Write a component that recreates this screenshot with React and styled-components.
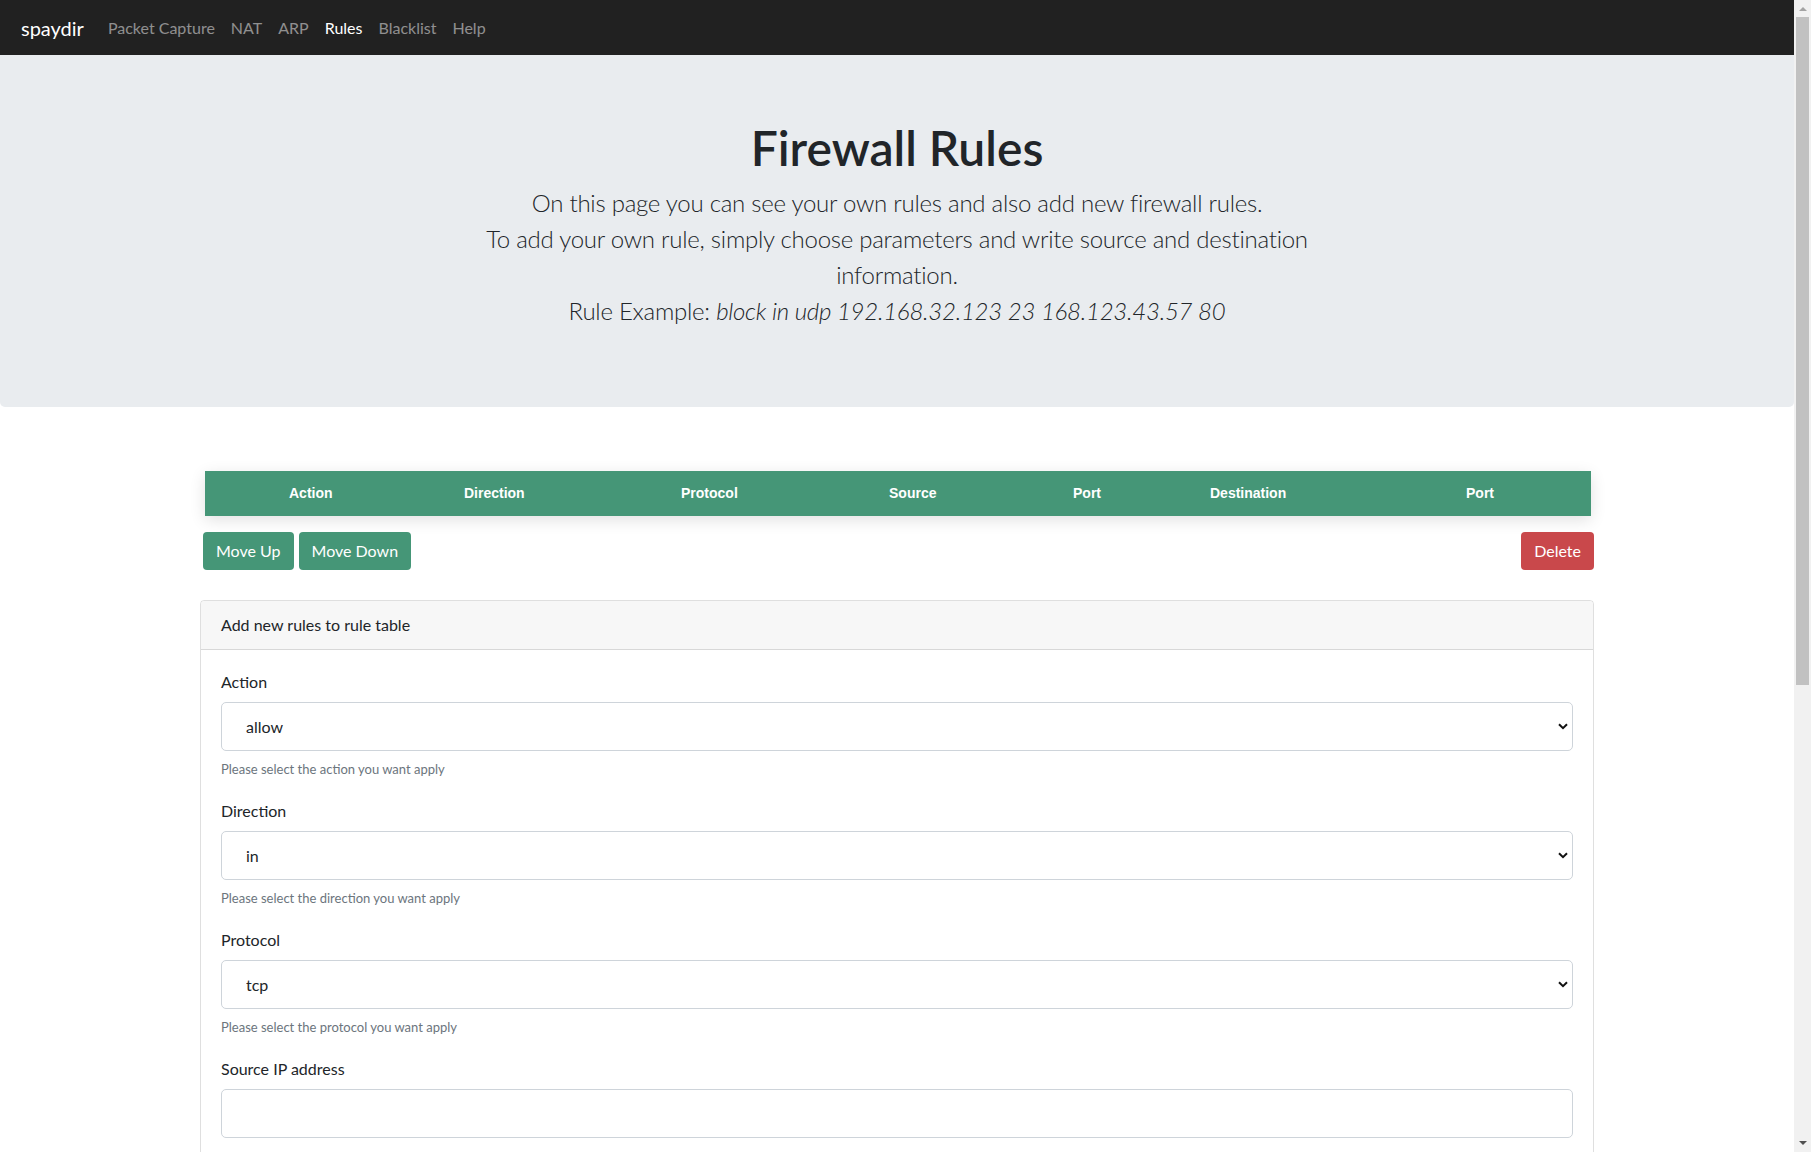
import React from "react";
import styled, { createGlobalStyle } from "styled-components";

const GlobalStyle = createGlobalStyle`
  html, body { margin: 0; padding: 0; }
  body {
    font-family: "Segoe UI", Lato, "Open Sans", sans-serif;
    font-size: 16px;
    line-height: 1.5;
    color: #212529;
    background: #fff;
    overflow: hidden;
  }
  * { box-sizing: border-box; }
`;

const Shell = styled.div`
  display: flex;
  align-items: flex-start;
  width: 100%;
`;

const Page = styled.div`
  flex: 1;
  min-width: 0;
`;

const ScrollBar = styled.aside`
  position: sticky;
  top: 0;
  flex: 0 0 17px;
  height: 100vh;
  display: flex;
  flex-direction: column;
  background: #f1f1f1;
`;

const ScrollButton = styled.div`
  flex: 0 0 17px;
  display: flex;
  align-items: center;
  justify-content: center;
`;

const ScrollThumb = styled.div`
  flex: 0 0 668px;
  margin: 0 2px;
  background: #c1c1c1;
`;

const ScrollTrack = styled.div`
  flex: 1;
`;

const Navbar = styled.nav`
  display: flex;
  align-items: center;
  height: 55px;
  padding: 0 16px 0 21px;
  background: #212121;
`;

const Brand = styled.a`
  color: #fff;
  font-size: 20px;
  line-height: 30px;
  margin-right: 16px;
  text-decoration: none;
`;

const NavLink = styled.a`
  color: ${(p) => (p.$active ? "#fff" : "rgba(255,255,255,0.5)")};
  padding: 8px;
  font-size: 16px;
  line-height: 24px;
  text-decoration: none;
`;

const Jumbotron = styled.header`
  background: #e9ecef;
  padding: 64px 32px 62px;
  border-radius: 0 0 5px 5px;
  text-align: center;
`;

const Title = styled.h1`
  margin: 0 0 8px;
  font-size: 48px;
  font-weight: 600;
  line-height: 1.2;
`;

const Lead = styled.p`
  max-width: 880px;
  margin: 0 auto 16px;
  font-size: 24px;
  font-weight: 300;
  line-height: 36px;
  letter-spacing: -0.25px;
`;

const Main = styled.main`
  max-width: 1394px;
  margin: 64px auto 0;
  padding-bottom: 260px;
`;

const RuleTable = styled.div`
  display: grid;
  grid-template-columns: 175px 217px 208px 184px 137px 256px 1fr;
  align-items: center;
  height: 45px;
  margin: 0 3px 0 4.5px;
  padding-left: 84.5px;
  background: #459677;
  color: #fff;
  font-family: "Liberation Sans", Arial, sans-serif;
  font-weight: 700;
  font-size: 14px;
  box-shadow: 0 4px 16px rgba(0, 0, 0, 0.12);
`;

const Th = styled.div``;

const ActionRow = styled.div`
  display: flex;
  gap: 5px;
  margin-top: 16px;
  padding-left: 3px;
`;

const Button = styled.button`
  font-family: inherit;
  font-size: 16px;
  line-height: 24px;
  padding: 6px 12px;
  border: 1px solid transparent;
  border-radius: 4px;
  color: #fff;
  background: ${(p) => (p.$variant === "danger" ? "#c9484b" : "#459677")};
  margin-left: ${(p) => (p.$push ? "auto" : "0")};
  cursor: pointer;
`;

const Card = styled.section`
  margin-top: 30px;
  border: 1px solid rgba(0, 0, 0, 0.125);
  border-radius: 4px;
`;

const CardHeader = styled.div`
  padding: 12px 20px;
  background: #f7f7f7;
  border-bottom: 1px solid rgba(0, 0, 0, 0.125);
  border-radius: 4px 4px 0 0;
`;

const CardBody = styled.div`
  padding: 20px;
`;

const FormGroup = styled.div`
  margin-bottom: 20px;
`;

const Label = styled.label`
  display: block;
  margin-bottom: 8px;
  line-height: 24px;
`;

const SelectWrap = styled.div`
  position: relative;
`;

const fieldCss = `
  display: block;
  width: 100%;
  height: 49px;
  padding: 0 24px;
  font-family: inherit;
  font-size: 16px;
  color: #212529;
  background: #fff;
  border: 1px solid #ced4da;
  border-radius: 5px;
  outline: none;
`;

const Select = styled.select`
  ${fieldCss}
  appearance: none;
  -webkit-appearance: none;
`;

const Input = styled.input`
  ${fieldCss}
`;

const Chevron = styled.svg`
  position: absolute;
  right: 5px;
  top: 50%;
  width: 10px;
  height: 7px;
  margin-top: -3px;
  pointer-events: none;
`;

const Help = styled.small`
  display: block;
  margin-top: 8px;
  font-size: 13px;
  line-height: 20px;
  color: #6c757d;
`;

const SelectField = ({ label, value, options, help }) => (
  <FormGroup>
    <Label>{label}</Label>
    <SelectWrap>
      <Select defaultValue={value}>
        {options.map((o) => (
          <option key={o}>{o}</option>
        ))}
      </Select>
      <Chevron viewBox="0 0 10 7">
        <path d="M1 1.2 L5 5.2 L9 1.2" fill="none" stroke="#111" strokeWidth="2" />
      </Chevron>
    </SelectWrap>
    <Help>{help}</Help>
  </FormGroup>
);

const InputField = ({ label }) => (
  <FormGroup>
    <Label>{label}</Label>
    <Input type="text" />
  </FormGroup>
);

const headers = ["Action", "Direction", "Protocol", "Source", "Port", "Destination", "Port"];

export default function App() {
  return (
    <>
      <GlobalStyle />
      <Shell>
        <Page>
          <Navbar>
            <Brand href="#">spaydir</Brand>
            <NavLink href="#">Packet Capture</NavLink>
            <NavLink href="#">NAT</NavLink>
            <NavLink href="#">ARP</NavLink>
            <NavLink href="#" $active>Rules</NavLink>
            <NavLink href="#">Blacklist</NavLink>
            <NavLink href="#">Help</NavLink>
          </Navbar>
          <Jumbotron>
            <Title>Firewall Rules</Title>
            <Lead>
              On this page you can see your own rules and also add new firewall rules.
              <br />
              To add your own rule, simply choose parameters and write source and destination information.
              <br />
              Rule Example: <em>block in udp 192.168.32.123 23 168.123.43.57 80</em>
            </Lead>
          </Jumbotron>
          <Main>
            <RuleTable>
              {headers.map((h, i) => (
                <Th key={i}>{h}</Th>
              ))}
            </RuleTable>
            <ActionRow>
              <Button>Move Up</Button>
              <Button>Move Down</Button>
              <Button $variant="danger" $push>Delete</Button>
            </ActionRow>
            <Card>
              <CardHeader>Add new rules to rule table</CardHeader>
              <CardBody>
                <SelectField label="Action" value="allow" options={["allow", "block"]} help="Please select the action you want apply" />
                <SelectField label="Direction" value="in" options={["in", "out"]} help="Please select the direction you want apply" />
                <SelectField label="Protocol" value="tcp" options={["tcp", "udp", "icmp"]} help="Please select the protocol you want apply" />
                <InputField label="Source IP address" />
                <InputField label="Source port" />
                <InputField label="Destination IP address" />
                <InputField label="Destination port" />
                <Button>Add Rule</Button>
              </CardBody>
            </Card>
          </Main>
        </Page>
        <ScrollBar>
          <ScrollButton>
            <svg width="8" height="5" viewBox="0 0 8 5"><path d="M0 5 L4 1 L8 5 Z" fill="#a3a3a3" /></svg>
          </ScrollButton>
          <ScrollThumb />
          <ScrollTrack />
          <ScrollButton>
            <svg width="8" height="5" viewBox="0 0 8 5"><path d="M0 0 L4 4 L8 0 Z" fill="#505050" /></svg>
          </ScrollButton>
        </ScrollBar>
      </Shell>
    </>
  );
}
